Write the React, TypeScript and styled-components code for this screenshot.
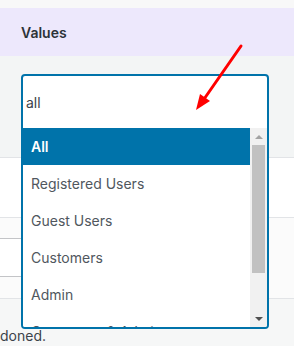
import React from "react";
import styled, { createGlobalStyle } from "styled-components";

const Global = createGlobalStyle`
  html, body { margin: 0; padding: 0; }
  body { font-family: Inter, "Noto Sans", sans-serif; background: #f7f7f7; overflow: hidden; }
`;

const Page = styled.div`
  position: relative;
  width: 294px;
  height: 346px;
  overflow: hidden;
  display: flex;
  flex-direction: column;
`;

const TopStrip = styled.div`
  height: 8px;
  background: #f8f8f8;
`;

const Header = styled.div`
  height: 48px;
  background: #ede8fc;
  display: flex;
  align-items: center;
  padding-left: 21px;
  font-size: 14px;
  font-weight: 600;
  color: #2c3338;
`;

const GraySection = styled.div`
  height: 101px;
  background: #f3f5f5;
  border-bottom: 1px solid #e2e4e7;
`;

const WhiteRow = styled.div`
  height: 59px;
  background: #ffffff;
  border-bottom: 1px solid #e2e4e7;
`;

const FieldRow = styled.div`
  height: 80px;
  background: #fbfbfb;
  border-bottom: 1px solid #e2e4e7;
  display: flex;
  align-items: center;
`;

const GhostInput = styled.div`
  width: 272px;
  height: 37px;
  margin-left: -10px;
  margin-top: -2px;
  background: #ffffff;
  border: 1px solid #c3c4c7;
  border-radius: 4px;
`;

const Footer = styled.div`
  flex: 1;
  background: #f6f7f7;
  font-size: 14px;
  color: #3c434a;
  padding-top: 29px;
  line-height: 16px;
`;

const Dropdown = styled.div`
  position: absolute;
  left: 21px;
  top: 74px;
  width: 248px;
  height: 255px;
  box-sizing: border-box;
  border: 2px solid #0073aa;
  border-radius: 4px;
  background: #ffffff;
  display: flex;
  flex-direction: column;
  overflow: hidden;
`;

const Search = styled.div`
  height: 52px;
  display: flex;
  align-items: center;
  padding-left: 3px;
  font-size: 14px;
  color: #3c434a;
`;

const ListArea = styled.div`
  flex: 1;
  display: flex;
  min-height: 0;
`;

const Options = styled.ul`
  flex: 1;
  list-style: none;
  margin: 0;
  padding: 0;
  overflow: hidden;
`;

const Option = styled.li<{ $active?: boolean }>`
  height: 37px;
  display: flex;
  align-items: center;
  padding-left: 8px;
  font-size: 14px;
  background: ${(p) => (p.$active ? "#0073aa" : "#ffffff")};
  color: ${(p) => (p.$active ? "#ffffff" : "#50575e")};
  font-weight: ${(p) => (p.$active ? 600 : 400)};
`;

const Scrollbar = styled.div`
  width: 17px;
  background: #f1f1f1;
  display: flex;
  flex-direction: column;
  align-items: center;
`;

const Arrow = styled.div<{ $down?: boolean }>`
  height: 17px;
  width: 17px;
  display: flex;
  align-items: center;
  justify-content: center;
  &::after {
    content: "";
    width: 0;
    height: 0;
    border-left: 4px solid transparent;
    border-right: 4px solid transparent;
    ${(p) =>
      p.$down
        ? "border-top: 4px solid #505050;"
        : "border-bottom: 4px solid #a3a3a3;"}
  }
`;

const Track = styled.div`
  flex: 1;
  width: 100%;
  display: flex;
  justify-content: center;
`;

const Thumb = styled.div`
  width: 13px;
  height: 128px;
  background: #c1c1c1;
`;

const Pointer = styled.svg`
  position: absolute;
  left: 190px;
  top: 40px;
`;

const options = [
  "All",
  "Registered Users",
  "Guest Users",
  "Customers",
  "Admin",
  "Customers & Admin",
];

export default function App() {
  return (
    <Page>
      <Global />
      <TopStrip />
      <Header>Values</Header>
      <GraySection />
      <WhiteRow />
      <FieldRow>
        <GhostInput />
      </FieldRow>
      <Footer>doned.</Footer>
      <Dropdown>
        <Search>all</Search>
        <ListArea>
          <Options>
            {options.map((o, i) => (
              <Option key={o} $active={i === 0}>
                {o}
              </Option>
            ))}
          </Options>
          <Scrollbar>
            <Arrow />
            <Track>
              <Thumb />
            </Track>
            <Arrow $down />
          </Scrollbar>
        </ListArea>
      </Dropdown>
      <Pointer width="60" height="76" viewBox="0 0 60 76">
        <line x1="51" y1="6" x2="12" y2="62" stroke="#f00" strokeWidth="3" strokeLinecap="round" />
        <polygon points="6,70 10,54 20,61" fill="#f00" />
      </Pointer>
    </Page>
  );
}
